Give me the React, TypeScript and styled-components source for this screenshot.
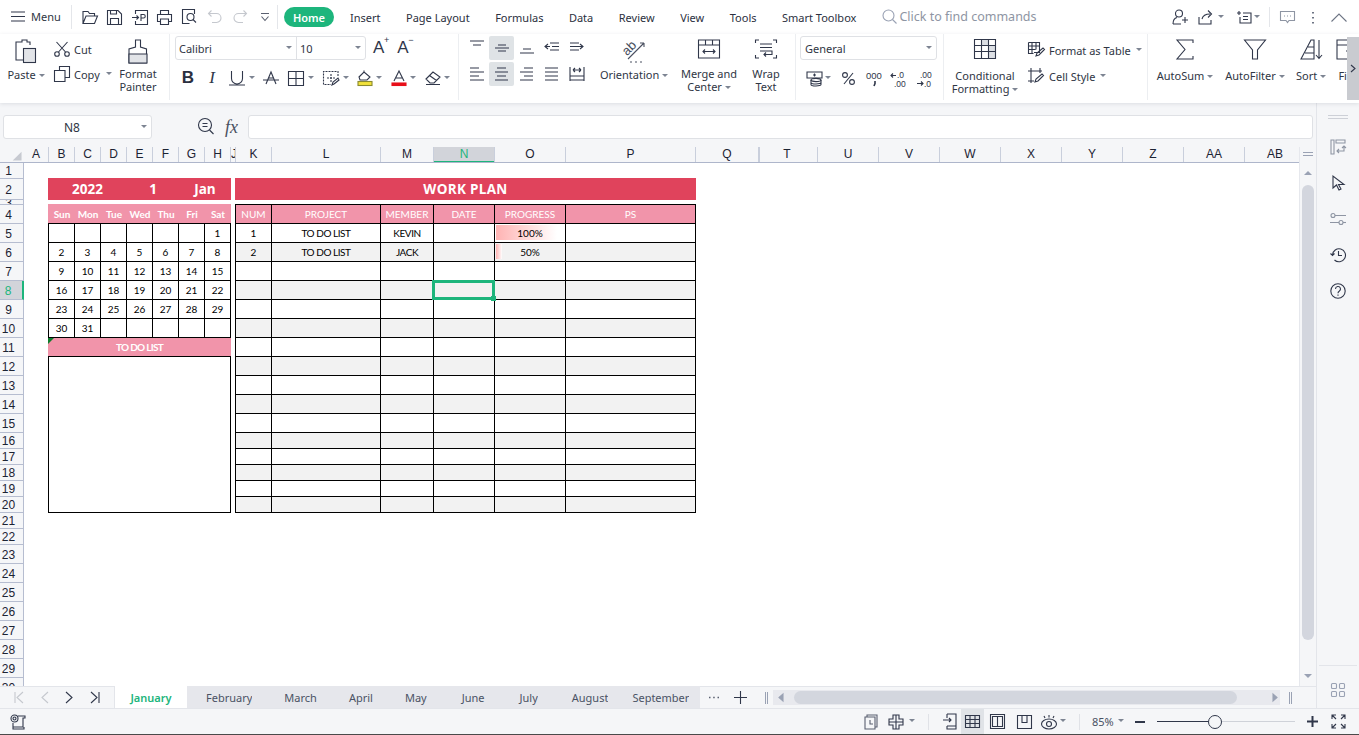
import React from 'react'
import styled, { createGlobalStyle } from 'styled-components'

const GlobalStyle = createGlobalStyle`
  html, body { margin: 0; padding: 0; width: 1359px; height: 735px; overflow: hidden; background: #fff; }
  * { box-sizing: border-box; }
  body { font-family: "Noto Sans", "Open Sans", sans-serif; font-size: 11px; color: #2f3644; }
  svg { display: block; flex-shrink: 0; fill: none; stroke: #30374a; stroke-width: 1.1; overflow: visible; }
`

const GREEN = '#1db57c'

const Page = styled('div')`
  width: 1359px;
  height: 735px;
  display: flex;
  flex-direction: column;
  overflow: hidden;
`

/* ---------- top bar ---------- */
const TopBar = styled('div')`
  height: 34px;
  display: flex;
  align-items: center;
  background: #fff;
  flex-shrink: 0;
`
const MenuButton = styled('div')`
  width: 72px;
  height: 24px;
  padding: 0 0 2px 11px;
  display: flex;
  align-items: center;
  gap: 6px;
  border-right: 1px solid #e4e6ea;
`
const QuickIcons = styled('div')`
  margin-left: 5px;
  width: 201px;
  height: 24px;
  display: flex;
  align-items: center;
  border-right: 1px solid #e4e6ea;
`
const QuickIcon = styled('div')`
  width: 25px;
  display: flex;
  justify-content: center;
`
const HomePill = styled('div')`
  margin-left: 6px;
  width: 50px;
  height: 20px;
  border-radius: 10px;
  background: ${GREEN};
  color: #fff;
  font-weight: 600;
  display: flex;
  align-items: center;
  justify-content: center;
`
const MenuTabs = styled('nav')`
  margin-left: 16px;
  display: flex;
  gap: 25.5px;
  color: #2b3040;
  white-space: nowrap;
`
const FindBox = styled('div')`
  margin-left: 26px;
  padding-bottom: 2px;
  display: flex;
  align-items: center;
  gap: 2px;
  color: #8e95a3;
  font-size: 12.5px;
  white-space: nowrap;
`
const Actions = styled('div')`
  margin-left: auto;
  padding-right: 12px;
  display: flex;
  align-items: center;
`
const ActionDivider = styled('div')`
  width: 1px;
  height: 20px;
  margin: 0 10px 0 9px;
  background: #e4e6ea;
`
const Slot = styled('span')<{ $ml?: number }>`
  display: inline-flex;
  align-items: center;
  margin-left: ${({ $ml }) => $ml ?? 0}px;
  flex-shrink: 0;
`
const Caret = styled('i')<{ $ml?: number }>`
  display: inline-block;
  flex-shrink: 0;
  width: 0;
  height: 0;
  margin-left: ${({ $ml }) => $ml ?? 0}px;
  border-left: 3px solid transparent;
  border-right: 3px solid transparent;
  border-top: 3px solid #7d8492;
  vertical-align: middle;
  position: relative;
  top: -1px;
`

/* ---------- ribbon ---------- */
const Ribbon = styled('div')`
  position: relative;
  z-index: 2;
  height: 69px;
  display: flex;
  flex-shrink: 0;
  overflow: hidden;
  background: #fff;
  box-shadow: 0 1px 4px rgba(40, 50, 70, 0.12);
`
const Group = styled('div')<{ $w: number; $last?: boolean }>`
  width: ${({ $w }) => $w}px;
  height: 66px;
  flex-shrink: 0;
  display: flex;
  align-items: flex-start;
  border-right: ${({ $last }) => ($last ? 'none' : '1px solid #eceef1')};
`
const BigTool = styled('div')<{ $w: number; $ml?: number; $iconH?: number }>`
  width: ${({ $w }) => $w}px;
  margin-left: ${({ $ml }) => $ml ?? 0}px;
  padding-top: 5px;
  flex-shrink: 0;
  display: flex;
  flex-direction: column;
  align-items: center;
  & > div:first-child {
    height: ${({ $iconH }) => $iconH ?? 28}px;
    display: flex;
    align-items: flex-start;
    justify-content: center;
  }
`
const BigIcon = styled('div')``
const ToolLabel = styled('div')`
  line-height: 13px;
  text-align: center;
  white-space: nowrap;
  color: #2f3644;
`
const SmallTools = styled('div')`
  margin-left: 6px;
  width: 60px;
  display: flex;
  flex-direction: column;
  gap: 7px;
  padding-top: 6px;
`
const SmallTool = styled('div')`
  height: 18px;
  display: flex;
  align-items: center;
  gap: 4px;
  white-space: nowrap;
`
const StyleTools = styled('div')`
  margin-left: 11px;
  display: flex;
  flex-direction: column;
  gap: 8px;
  padding-top: 7px;
`
const FontColumn = styled('div')`
  padding: 2px 0 0 5px;
`
const FontRow = styled('div')`
  display: flex;
  align-items: center;
`
const FontBox = styled('div')`
  width: 191px;
  height: 24px;
  display: flex;
  border: 1px solid #dfe1e5;
  border-radius: 3px;
`
const FontName = styled('div')<{ $w: number }>`
  width: ${({ $w }) => $w}px;
  padding: 0 4px 0 3px;
  display: flex;
  align-items: center;
  justify-content: space-between;
  & + & {
    border-left: 1px solid #dfe1e5;
  }
`
const ToolRow = styled('div')`
  margin-top: 5px;
  height: 26px;
  display: flex;
  align-items: center;
`
const GrowGlyph = styled('span')<{ $ml: number }>`
  margin-left: ${({ $ml }) => $ml}px;
  position: relative;
  font-family: "Liberation Sans", sans-serif;
  font-size: 17px;
  line-height: 20px;
  color: #30374a;
  & sup {
    position: absolute;
    left: 11px;
    top: -3px;
    font-size: 9px;
    line-height: 10px;
  }
`
const BoldGlyph = styled('span')`
  font-family: "Liberation Sans", sans-serif;
  font-size: 17px;
  font-weight: 700;
  width: 18px;
  text-align: center;
  color: #2b3040;
`
const ItalicGlyph = styled('span')`
  font-family: "Liberation Serif", serif;
  font-size: 17px;
  font-style: italic;
  width: 16px;
  margin-left: 7px;
  text-align: center;
  color: #30374a;
`
const AlignGrid = styled('div')`
  margin: 2px 0 0 5px;
  display: grid;
  grid-template-columns: repeat(5, 25px);
  grid-auto-rows: 24px;
  row-gap: 2px;
`
const AlignCell = styled('div')<{ $active?: boolean }>`
  display: flex;
  align-items: center;
  justify-content: center;
  background: ${({ $active }) => ($active ? '#dfe3e6' : 'transparent')};
  border-radius: 2px;
`
const NumberColumn = styled('div')`
  padding: 2px 0 0 4px;
`
const FormatSelect = styled('div')`
  width: 137px;
  height: 24px;
  padding: 0 4px;
  display: flex;
  align-items: center;
  justify-content: space-between;
  border: 1px solid #dfe1e5;
  border-radius: 3px;
`
const RibbonMore = styled('div')`
  position: absolute;
  right: 0;
  top: 3px;
  width: 12px;
  height: 63px;
  background: #c9cbd0;
  display: flex;
  align-items: center;
  justify-content: center;
`

/* ---------- workspace ---------- */
const Workspace = styled('div')`
  flex: 1;
  min-height: 0;
  display: flex;
`
const LeftPane = styled('div')`
  width: 1316px;
  display: flex;
  flex-direction: column;
`
const FormulaBar = styled('div')`
  height: 44px;
  flex-shrink: 0;
  padding: 12px 3px 0;
  display: flex;
  align-items: flex-start;
  background: #f5f6f8;
`
const NameBox = styled('div')`
  width: 149px;
  height: 24px;
  padding: 0 4px 0 60px;
  display: flex;
  align-items: center;
  justify-content: space-between;
  background: #fff;
  border: 1px solid #dfe1e5;
  border-radius: 3px;
  font-size: 12px;
`
const FxGlyph = styled('span')`
  margin-left: 10px;
  width: 20px;
  font-family: "Liberation Serif", serif;
  font-style: italic;
  font-size: 18px;
  line-height: 24px;
  color: #4a5060;
`
const FormulaInput = styled('div')`
  margin-left: 3px;
  width: 1066px;
  height: 24px;
  background: #fff;
  border: 1px solid #dfe1e5;
  border-radius: 3px;
`
const SheetArea = styled('div')`
  flex: 1;
  min-height: 0;
  display: flex;
`
const Grid = styled('div')`
  width: 1299px;
  display: flex;
  flex-direction: column;
  overflow: hidden;
`
const ColHeads = styled('div')`
  height: 16px;
  flex-shrink: 0;
  display: flex;
  background: #f5f6f8;
  border-bottom: 1px solid #aeb6cb;
`
const Corner = styled('div')`
  width: 24px;
  flex-shrink: 0;
  display: flex;
  align-items: flex-end;
  justify-content: flex-end;
  padding: 0 3px 2px 0;
`
const ColHead = styled('div')<{ $w: number; $active?: boolean; $double?: boolean }>`
  width: ${({ $w }) => $w}px;
  height: 15px;
  flex-shrink: 0;
  overflow: hidden;
  font-family: "Liberation Sans", sans-serif;
  font-size: 12px;
  line-height: 15px;
  text-align: center;
  padding-right: ${({ $double }) => ($double ? 3 : 0)}px;
  color: ${({ $active }) => ($active ? GREEN : '#1c2333')};
  background: ${({ $active }) => ($active ? '#d2d4da' : 'transparent')};
  border-right: 1px solid #c9cfdc;
  border-left: ${({ $double }) => ($double ? '1px solid #c9cfdc' : 'none')};
  box-shadow: ${({ $active }) => ($active ? `inset 0 -1px 0 ${GREEN}` : 'none')};
`
const GridBody = styled('div')`
  flex: 1;
  min-height: 0;
  display: flex;
`
const RowHeads = styled('div')`
  width: 24px;
  flex-shrink: 0;
  background: #f5f6f8;
`
const RowHead = styled('div')<{ $h: number; $active?: boolean }>`
  height: ${({ $h }) => $h}px;
  padding-right: 6px;
  overflow: hidden;
  font-family: "Liberation Sans", sans-serif;
  font-size: 12px;
  line-height: ${({ $h }) => $h + 1}px;
  text-align: center;
  color: ${({ $active }) => ($active ? GREEN : '#1c2333')};
  background: ${({ $active }) => ($active ? '#d2d4da' : 'transparent')};
  border-bottom: 1px solid #b6bdd0;
  border-right: ${({ $active }) => ($active ? `2px solid ${GREEN}` : '1px solid #b6bdd0')};
`
const Canvas = styled('div')`
  flex: 1;
  padding: 15px 0 0 24px;
  display: flex;
  align-items: flex-start;
  gap: 4px;
  background: #fff;
  font-family: Lato, "Open Sans", sans-serif;
  font-size: 10px;
  color: #000;
`
const Calendar = styled('div')`
  width: 183px;
`
const TitleBar = styled('div')`
  height: 22px;
  margin-bottom: 4px;
  background: #e0435c;
  color: #fff;
  font-family: "Open Sans", sans-serif;
  font-weight: 700;
  font-size: 13.5px;
  display: grid;
  align-items: center;
  text-align: center;
`
const YearTitle = styled(TitleBar)`
  grid-template-columns: 79px 52px 52px;
`
const PlanTitle = styled(TitleBar)`
  letter-spacing: 0.3px;
`
const DayHeads = styled('div')`
  height: 19px;
  display: grid;
  grid-template-columns: repeat(7, 26px);
  padding-left: 1px;
  align-items: center;
  text-align: center;
  background: #f194aa;
  color: #fff;
  font-weight: 700;
  font-size: 10px;
`
const DayGrid = styled('div')`
  display: grid;
  grid-template-columns: repeat(7, 26px);
  grid-auto-rows: 19px;
  border-top: 1px solid #000;
  border-left: 1px solid #000;
`
const DayCell = styled('div')`
  display: flex;
  align-items: center;
  justify-content: center;
  border-right: 1px solid #000;
  border-bottom: 1px solid #000;
`
const TodoHead = styled('div')`
  position: relative;
  height: 19px;
  display: flex;
  align-items: center;
  justify-content: center;
  background: #f194aa;
  color: #fff;
  font-weight: 700;
  letter-spacing: -0.7px;
  border-bottom: 1px solid #000;
  &::before {
    content: '';
    position: absolute;
    left: 0;
    top: 0;
    border-top: 6px solid #0e7d2c;
    border-right: 6px solid transparent;
  }
`
const TodoBox = styled('div')`
  height: 156px;
  border: 1px solid #000;
  border-top: none;
`
const Plan = styled('div')`
  width: 461px;
`
const PlanTable = styled('div')`
  display: grid;
  grid-template-columns: 36px 109px 53px 61px 71px 130px;
  grid-template-rows: 19px repeat(11, 19px) repeat(5, 16px);
  border-top: 1px solid #000;
  border-left: 1px solid #000;
`
const PlanHead = styled('div')`
  display: flex;
  align-items: center;
  justify-content: center;
  background: #f194aa;
  color: #fff;
  border-right: 1px solid #000;
  border-bottom: 1px solid #000;
`
const PlanCell = styled('div')<{ $grey: boolean; $bar?: number; $tight?: boolean }>`
  position: relative;
  display: flex;
  align-items: center;
  justify-content: center;
  letter-spacing: ${({ $tight }) => ($tight ? '-0.45px' : 'normal')};
  border-right: 1px solid #000;
  border-bottom: 1px solid #000;
  background-color: ${({ $grey }) => ($grey ? '#f2f2f2' : '#fff')};
  background-image: ${({ $bar }) =>
    $bar ? 'linear-gradient(to right, #ffb3b3, rgba(255,255,255,0.9))' : 'none'};
  background-repeat: no-repeat;
  background-position: 1px 1px;
  background-size: ${({ $bar }) => ($bar ? `${$bar}px 15px` : 'auto')};
`
const Selection = styled('div')`
  position: absolute;
  z-index: 1;
  left: -2px;
  right: -1px;
  top: -1px;
  bottom: -1px;
  border: 3px solid ${GREEN};
  &::after {
    content: '';
    position: absolute;
    right: -4px;
    bottom: -4px;
    width: 5px;
    height: 5px;
    background: ${GREEN};
  }
`
const VScroll = styled('div')`
  width: 17px;
  flex-shrink: 0;
  display: flex;
  flex-direction: column;
  align-items: center;
  background: #f5f6f8;
  border-left: 1px solid #e6e8ed;
`
const ScrollHandle = styled('div')`
  width: 10px;
  height: 4px;
  margin-top: 5px;
  border-top: 1px solid #9aa2b4;
  border-bottom: 1px solid #9aa2b4;
`
const ArrowUp = styled('i')`
  margin-top: 15px;
  border-left: 4px solid transparent;
  border-right: 4px solid transparent;
  border-bottom: 4px solid #9aa2b4;
`
const ArrowDown = styled('i')`
  margin: auto 0 8px;
  border-left: 4px solid transparent;
  border-right: 4px solid transparent;
  border-top: 4px solid #9aa2b4;
`
const VThumb = styled('div')`
  width: 12px;
  height: 455px;
  margin-top: 10px;
  border-radius: 6px;
  background: #d3d6de;
`

/* ---------- sheet tabs ---------- */
const TabStrip = styled('div')`
  height: 22px;
  flex-shrink: 0;
  display: flex;
  align-items: stretch;
  background: #f5f6f8;
`
const TabNav = styled('div')`
  width: 115px;
  display: flex;
  align-items: center;
  justify-content: space-around;
  padding: 0 6px;
  border-top: 1px solid #e3e5ea;
  border-right: 1px solid #e3e5ea;
`
const SheetTab = styled('div')<{ $active?: boolean; $pl?: number }>`
  padding: 0 0 0 ${({ $pl }) => $pl ?? 32}px;
  display: flex;
  align-items: center;
  white-space: nowrap;
  background: ${({ $active }) => ($active ? '#fff' : '#e6e7ec')};
  color: ${({ $active }) => ($active ? GREEN : '#4a5264')};
  font-weight: ${({ $active }) => ($active ? 600 : 400)};
`
const JanuaryTab = styled(SheetTab)`
  width: 72px;
  padding: 0;
  justify-content: center;
`
const TabEnd = styled('div')`
  width: 11px;
  background: #e6e7ec;
`
const TabTools = styled('div')`
  flex: 1;
  display: flex;
  align-items: center;
  border-top: 1px solid #e3e5ea;
`
const HScroll = styled('div')`
  width: 507px;
  height: 15px;
  margin-left: 5px;
  padding: 0 3px 0 6px;
  display: flex;
  align-items: center;
  background: #e8e9ee;
`
const HThumb = styled('div')`
  width: 443px;
  height: 13px;
  margin: 0 auto 0 11px;
  border-radius: 7px;
  background: #d3d6de;
`
const Splitter = styled('div')<{ $ml: number }>`
  width: 3px;
  height: 12px;
  margin-left: ${({ $ml }) => $ml}px;
  border-left: 1px solid #9aa2b4;
  border-right: 1px solid #9aa2b4;
`

/* ---------- side rail ---------- */
const Rail = styled('aside')`
  width: 43px;
  display: flex;
  flex-direction: column;
  align-items: center;
  background: #f5f6f8;
  border-left: 1px solid #e3e5ea;
`
const RailHandle = styled('div')`
  width: 20px;
  height: 4px;
  margin: 12px 0 10px;
  border-top: 1px solid #cdd0d7;
  border-bottom: 1px solid #cdd0d7;
`
const RailIcon = styled('div')`
  height: 36px;
  display: flex;
  align-items: center;
`
const RailFoot = styled('div')`
  margin-top: auto;
  width: 38px;
  height: 43px;
  padding-top: 17px;
  display: flex;
  justify-content: center;
  border-top: 1px solid #e3e5ea;
`

/* ---------- status bar ---------- */
const StatusBar = styled('footer')`
  height: 27px;
  flex-shrink: 0;
  padding-left: 10px;
  display: flex;
  align-items: center;
  background: #f5f6f8;
  border-top: 1px solid #e3e5ea;
  border-bottom: 1px solid #4a4a4a;
`
const ActiveView = styled('div')`
  width: 23px;
  height: 25px;
  margin-left: 4px;
  display: flex;
  align-items: center;
  justify-content: center;
  background: #e0e3e7;
`
const StatusDivider = styled('div')<{ $ml: number }>`
  width: 1px;
  height: 16px;
  margin-left: ${({ $ml }) => $ml}px;
  background: #e0e2e7;
`
const ZoomValue = styled('span')`
  margin-left: 12px;
  color: #4a5264;
`
const Slider = styled('div')`
  position: relative;
  width: 138px;
  height: 1px;
  margin-left: 12px;
  background: linear-gradient(to right, #30374a 52px, #cfd2d9 52px);
  &::after {
    content: '';
    position: absolute;
    left: 51px;
    top: -6px;
    width: 12px;
    height: 12px;
    border-radius: 50%;
    background: #f5f6f8;
    border: 1px solid #30374a;
  }
`

/* ---------- icons ---------- */
function Ico({ w, h, children, s }: { w: number; h: number; children: React.ReactNode; s?: string }) {
  return (
    <svg width={w} height={h} viewBox={`0 0 ${w} ${h}`} style={s ? { stroke: s } : undefined}>
      {children}
    </svg>
  )
}

const LIGHT = '#c5c8ce'

const quickIcons = [
  <Ico w={16} h={15}><path d="M1 13.5V1.5h5l1.5 2h5V6M1 13.5 4 6h11.5l-3 7.5z" /></Ico>,
  <Ico w={15} h={15}><path d="M.5.5h10.5l3.5 3.5v10.5H.5zM3.5 14.5V8.5h8v6M3.5.5v3.5h6V.5" /></Ico>,
  <Ico w={16} h={15}><path d="M3.5 4V.5h12v14h-12V11M0 7.5h6.5M4.5 5.5l2 2-2 2M9 11V4.5h2.5a1.7 1.7 0 0 1 0 3.5H9" /></Ico>,
  <Ico w={15} h={15}><path d="M3.5 4.5V.5h8v4M3.5 11.5H.5v-7h14v7h-3M3.5 9h8v5.5h-8z" /></Ico>,
  <Ico w={15} h={16}><path d="M12.5 5V.5H.5v14h7" /><circle cx="8.5" cy="8" r="3.5" /><path d="m11 10.5 3 3" /></Ico>,
  <Ico w={14} h={14} s={LIGHT}><path d="M3.5.5.5 3.5l3 3M.5 3.5h8a4.5 4.5 0 0 1 0 9H4" /></Ico>,
  <Ico w={14} h={14} s={LIGHT}><path d="m10.5.5 3 3-3 3M13.5 3.5h-8a4.5 4.5 0 0 0 0 9H10" /></Ico>,
  <Ico w={10} h={9} s="#5a6070"><path d="M1 .5h8M1.5 3.5 5 7.5l3.5-4" /></Ico>,
]

const alignIcons = [
  'M1 1h14M4 5h8',
  'M4 5h8M1 8h14M4 11h8',
  'M4 9h8M1 13h14',
  'M6 3h9M8 6.5h7M6 10h9M4 4 1 6.5 4 9M1 6.5h5',
  'M1 3h9M1 6.5h7M1 10h9M11 4l3 2.5L11 9M8 6.5h6',
  'M1 2h9M1 6h14M1 10h9M1 14h14',
  'M3 2h9M1 6h13M3 10h9M1 14h13',
  'M5 2h9M1 6h13M5 10h9M1 14h13',
  'M1 2h13M1 6h13M1 10h13M1 14h13',
  'M1 1v14M15 1v14M1 10h14M1 14h14M4 4h8M4 4l2-2M4 4l2 2M12 4l-2-2M12 4l-2 2',
]

function DayTable() {
  const days = [
    '', '', '', '', '', '', '1',
    '2', '3', '4', '5', '6', '7', '8',
    '9', '10', '11', '12', '13', '14', '15',
    '16', '17', '18', '19', '20', '21', '22',
    '23', '24', '25', '26', '27', '28', '29',
    '30', '31', '', '', '', '', '',
  ]
  return (
    <DayGrid>
      {days.map((d, i) => (
        <DayCell key={i}>{d}</DayCell>
      ))}
    </DayGrid>
  )
}

function PlanRows() {
  const rows = []
  for (let r = 5; r <= 20; r++) {
    const grey = r % 2 === 0
    const first = r === 5 || r === 6
    rows.push(
      <React.Fragment key={r}>
        <PlanCell $grey={grey}>{r === 5 ? '1' : r === 6 ? '2' : ''}</PlanCell>
        <PlanCell $grey={grey} $tight>{first ? 'TO DO LIST' : ''}</PlanCell>
        <PlanCell $grey={grey} $tight>{r === 5 ? 'KEVIN' : r === 6 ? 'JACK' : ''}</PlanCell>
        <PlanCell $grey={grey}>{r === 8 && <Selection />}</PlanCell>
        <PlanCell $grey={grey} $bar={r === 5 ? 61 : r === 6 ? 6 : undefined}>
          {r === 5 ? '100%' : r === 6 ? '50%' : ''}
        </PlanCell>
        <PlanCell $grey={grey} />
      </React.Fragment>,
    )
  }
  return <>{rows}</>
}

const rowHeights = [
  16, 21, 5, 19, 19, 19, 19, 19, 19, 19, 19, 19, 19, 19, 19, 16, 16, 16, 16, 16, 16, 16, 19, 19, 19, 19, 19, 19, 19, 19,
]

const columns: [string, number][] = [
  ['A', 25], ['B', 26], ['C', 26], ['D', 26], ['E', 26], ['F', 26], ['G', 26], ['H', 26], ['J', 5],
  ['K', 36], ['L', 109], ['M', 53], ['N', 61], ['O', 71], ['P', 130], ['Q', 63], ['T', 59],
  ['U', 61], ['V', 61], ['W', 61], ['X', 61], ['Y', 61], ['Z', 61], ['AA', 61], ['AB', 61],
]

const sheetTabs: [string, number][] = [
  ['February', 19], ['March', 32], ['April', 32], ['May', 32], ['June', 35], ['July', 35], ['August', 34], ['September', 24],
]

export default function App() {
  return (
    <Page>
      <GlobalStyle />
      <TopBar>
        <MenuButton>
          <Ico w={14} h={11}><path d="M0 1h14M0 5.5h14M0 10h14" /></Ico>
          Menu
        </MenuButton>
        <QuickIcons>
          {quickIcons.map((icon, i) => (
            <QuickIcon key={i}>{icon}</QuickIcon>
          ))}
        </QuickIcons>
        <HomePill>Home</HomePill>
        <MenuTabs>
          <span>Insert</span>
          <span>Page Layout</span>
          <span>Formulas</span>
          <span>Data</span>
          <span>Review</span>
          <span>View</span>
          <span>Tools</span>
          <span>Smart Toolbox</span>
        </MenuTabs>
        <FindBox>
          <Ico w={15} h={15} s="#9aa2b4"><circle cx="6.5" cy="6.5" r="5.5" /><path d="m10.5 10.5 4 4" /></Ico>
          Click to find commands
        </FindBox>
        <Actions>
          <Slot>
            <Ico w={16} h={16}><circle cx="7" cy="4.5" r="3.5" /><path d="M1 15c0-4 2-6 4-6.5M1 15h8M13 8v6M10 11h6" /></Ico>
          </Slot>
          <Slot $ml={10}>
            <Ico w={18} h={15}><path d="M1 7v7h12V10M4 9c1-4 4-5 8-5M10 .5 13.5 4 10 7.5" /></Ico>
          </Slot>
          <Caret $ml={2} />
          <Slot $ml={12}>
            <Ico w={16} h={14}><path d="M3 1v4M1 3h4M7 3h8v10H4V7M7 6.5h5M7 9.5h5" /></Ico>
          </Slot>
          <Caret $ml={2} />
          <ActionDivider />
          <Slot>
            <Ico w={15} h={13} s="#8e95a3"><path d="M.5.5h14v9H9l-1.5 2-1.5-2H.5zM4 5h1M7 5h1M10 5h1" /></Ico>
          </Slot>
          <Slot $ml={16}>
            <Ico w={4} h={13} s="#6d7484"><path d="M2 1v1.5M2 6v1.5M2 11v1.5" strokeWidth="2" /></Ico>
          </Slot>
          <Slot $ml={16}>
            <Ico w={16} h={9} s="#6d7484"><path d="M.5 8.5 8 1l7.5 7.5" /></Ico>
          </Slot>
        </Actions>
      </TopBar>

      <Ribbon>
        <Group $w={170}>
          <BigTool $w={44} $ml={4} $iconH={29}>
            <BigIcon>
              <Ico w={22} h={24}>
                <path d="M15 6V3h-3V1H7v2H1v18h7" />
                <rect x="8.5" y="9.5" width="12" height="14" fill="#e2e4e8" />
              </Ico>
            </BigIcon>
            <ToolLabel>Paste <Caret /></ToolLabel>
          </BigTool>
          <SmallTools>
            <SmallTool>
              <Ico w={16} h={16}><circle cx="3" cy="13" r="2.3" /><circle cx="13" cy="13" r="2.3" /><path d="m4.5 11 9-10M11.5 11l-9-10" /></Ico>
              Cut
            </SmallTool>
            <SmallTool>
              <Ico w={16} h={16}><path d="M5.5 4V.5h10v11H11M.5 4.5h10.5v11H.5z" /></Ico>
              Copy <Caret $ml={2} />
            </SmallTool>
          </SmallTools>
          <BigTool $w={48}>
            <BigIcon>
              <Ico w={20} h={25}>
                <path d="M7.5 8V1h5v7l6 2v14H1V10z" />
                <path d="M1 15h18v9H1z" fill="#e2e4e8" />
              </Ico>
            </BigIcon>
            <ToolLabel>Format</ToolLabel>
            <ToolLabel>Painter</ToolLabel>
          </BigTool>
        </Group>

        <Group $w={289}>
          <FontColumn>
            <FontRow>
              <FontBox>
                <FontName $w={120}>Calibri<Caret /></FontName>
                <FontName $w={69}>10<Caret /></FontName>
              </FontBox>
              <GrowGlyph $ml={7}>A<sup>+</sup></GrowGlyph>
              <GrowGlyph $ml={13}>A<sup>−</sup></GrowGlyph>
            </FontRow>
            <ToolRow>
              <Slot $ml={4}><BoldGlyph>B</BoldGlyph></Slot>
              <ItalicGlyph>I</ItalicGlyph>
              <Slot $ml={9}>
                <Ico w={16} h={16}><path d="M2.5 1v7.5a5.5 5.5 0 0 0 11 0V1M0 15h16" /></Ico>
              </Slot>
              <Caret $ml={4} />
              <Slot $ml={8}>
                <Ico w={16} h={15}><path d="m3 13 5-12 5 12M0 9h16M5 7h6" /></Ico>
              </Slot>
              <Slot $ml={9}>
                <Ico w={16} h={15}><path d="M.5.5h15v14H.5zM8 .5v14M.5 7.5h15" /></Ico>
              </Slot>
              <Caret $ml={4} />
              <Slot $ml={9}>
                <Ico w={16} h={15}><path d="M15 5V.5H.5v13H8M8 3v8M4 7h8" strokeDasharray="2 1" /><path d="m9 14 1-3 5-4 1 2-5 4z" /></Ico>
              </Slot>
              <Caret $ml={4} />
              <Slot $ml={8}>
                <Ico w={16} h={16}>
                  <path d="m2 7 5-5 6 5-3 3H3zM7 2V.5" />
                  <rect x="1" y="11.5" width="14" height="4" fill="#f2e23a" stroke="#8a8a30" />
                </Ico>
              </Slot>
              <Caret $ml={3} />
              <Slot $ml={9}>
                <Ico w={16} h={16}>
                  <path d="m3 11 5-10 5 10M5 8h6" />
                  <rect x="1" y="13" width="14" height="2.5" fill="#e8101a" stroke="#e8101a" />
                </Ico>
              </Slot>
              <Caret $ml={3} />
              <Slot $ml={9}>
                <Ico w={16} h={14}><path d="m1 8 7-7 7 5-6 6H5zM4.5 4.5l7 5M1 13.5h14" /></Ico>
              </Slot>
              <Caret $ml={3} />
            </ToolRow>
          </FontColumn>
        </Group>

        <Group $w={337}>
          <AlignGrid>
            {alignIcons.map((d, i) => (
              <AlignCell key={i} $active={i === 1 || i === 6}>
                <Ico w={16} h={16}><path d={d} /></Ico>
              </AlignCell>
            ))}
          </AlignGrid>
          <BigTool $w={68} $ml={11} $iconH={29}>
            <BigIcon>
              <Ico w={26} h={26} s="#4a5060">
                <text x="9" y="13" textAnchor="middle" fontSize="13" fill="#4a5060" stroke="none" transform="rotate(-45 9 10)" fontFamily="Liberation Sans">ab</text>
                <path d="m7 20 16-16M23 4h-4M23 4v4M9 23h2M14 23h2M19 23h2" />
              </Ico>
            </BigIcon>
            <ToolLabel>Orientation <Caret /></ToolLabel>
          </BigTool>
          <BigTool $w={60} $ml={11}>
            <BigIcon>
              <Ico w={22} h={20}>
                <path d="M.5 1h21v18H.5zM.5 6h21M7.5 1v5M14.5 1v5M5 12.5h12M7 10.5l-2 2 2 2M15 10.5l2 2-2 2" />
              </Ico>
            </BigIcon>
            <ToolLabel>Merge and</ToolLabel>
            <ToolLabel>Center <Caret /></ToolLabel>
          </BigTool>
          <BigTool $w={36} $ml={9}>
            <BigIcon>
              <Ico w={22} h={20}>
                <path d="M4 1H.5v3M18 1h3.5v3M4 19H.5v-3M18 19h3.5v-3M5 5h12M5 8.5h12M5 12h12v3.5H9M11 13.5l-2 2 2 2" />
              </Ico>
            </BigIcon>
            <ToolLabel>Wrap</ToolLabel>
            <ToolLabel>Text</ToolLabel>
          </BigTool>
        </Group>

        <Group $w={148}>
          <NumberColumn>
            <FormatSelect>General<Caret /></FormatSelect>
            <ToolRow>
              <Slot $ml={6}>
                <Ico w={17} h={15}>
                  <path d="M1 1h15v6H1zM8.5 2.5v3M7 4h3" />
                  <ellipse cx="10" cy="9" rx="5" ry="1.6" />
                  <path d="M5 9v4.5c0 .9 2.2 1.5 5 1.5s5-.6 5-1.5V9M5 11.5c0 .9 2.2 1.5 5 1.5s5-.6 5-1.5" />
                </Ico>
              </Slot>
              <Caret $ml={2} />
              <Slot $ml={11}>
                <Ico w={13} h={13}><circle cx="3" cy="3" r="2.4" /><circle cx="10" cy="10" r="2.4" /><path d="M11 1 2 12" /></Ico>
              </Slot>
              <Slot $ml={11}>
                <Ico w={18} h={20}>
                  <text x="0" y="11" fontSize="9.5" fill="#30374a" stroke="none" fontFamily="Liberation Sans">000</text>
                  <path d="M9 13v2.5L8 18" strokeWidth="1.6" />
                </Ico>
              </Slot>
              <Slot $ml={6}>
                <Ico w={20} h={20}>
                  <text x="7" y="10" fontSize="8.5" fill="#30374a" stroke="none" fontFamily="Liberation Sans">.0</text>
                  <text x="4" y="19" fontSize="8.5" fill="#30374a" stroke="none" fontFamily="Liberation Sans">.00</text>
                  <path d="M1 7.5h5M3 5.5l-2 2 2 2" />
                </Ico>
              </Slot>
              <Slot $ml={5}>
                <Ico w={20} h={20}>
                  <text x="5" y="10" fontSize="8.5" fill="#30374a" stroke="none" fontFamily="Liberation Sans">.00</text>
                  <text x="9" y="19" fontSize="8.5" fill="#30374a" stroke="none" fontFamily="Liberation Sans">.0</text>
                  <path d="M2 15.5h6M6 13.5l2 2-2 2" />
                </Ico>
              </Slot>
            </ToolRow>
          </NumberColumn>
        </Group>

        <Group $w={204}>
          <BigTool $w={64} $ml={9} $iconH={30}>
            <BigIcon>
              <Ico w={22} h={20}>
                <path d="M7.5 .5h7v6h-7zM14.5 6.5h7v6h-7zM14.5 12.5h7v7h-7z" fill="#dcdfe4" stroke="none" />
                <path d="M.5 .5h21v19H.5zM.5 6.5h21M.5 12.5h21M7.5 .5v19M14.5 .5v19" />
              </Ico>
            </BigIcon>
            <ToolLabel>Conditional</ToolLabel>
            <ToolLabel>Formatting <Caret /></ToolLabel>
          </BigTool>
          <StyleTools>
            <SmallTool>
              <Ico w={17} h={16}><path d="M.5.5h11v10H6M.5.5v11h5M.5 4h11M.5 7.5h7M4 .5v11M8 .5v7" /><path d="m8 14 1-3 6-5 1.5 1.5-5.5 5.5z" /></Ico>
              Format as Table <Caret $ml={1} />
            </SmallTool>
            <SmallTool>
              <Ico w={17} h={16}><path d="M3 0v15M0 3h14M12 0v5M0 13h6" /><path d="m7 14 1-3 6-5 1.5 1.5-5.5 5.5z" /></Ico>
              Cell Style <Caret $ml={1} />
            </SmallTool>
          </StyleTools>
        </Group>

        <Group $w={211} $last>
          <BigTool $w={58} $ml={8} $iconH={30}>
            <BigIcon>
              <Ico w={18} h={21}><path d="M17 4V1H1l8 9.5L1 20h16v-3" /></Ico>
            </BigIcon>
            <ToolLabel>AutoSum <Caret /></ToolLabel>
          </BigTool>
          <BigTool $w={66} $ml={8} $iconH={30}>
            <BigIcon>
              <Ico w={22} h={21}><path d="M.5 1h21l-8 10v9h-5v-9z" /></Ico>
            </BigIcon>
            <ToolLabel>AutoFilter <Caret /></ToolLabel>
          </BigTool>
          <BigTool $w={34} $ml={6} $iconH={30}>
            <BigIcon>
              <Ico w={23} h={21}>
                <path d="M1 20 11 1h3v19zM5 14h9M8 8h6M19 1v18M16 16l3 3.5 3-3.5" />
              </Ico>
            </BigIcon>
            <ToolLabel>Sort <Caret /></ToolLabel>
          </BigTool>
          <BigTool $w={17} $ml={9} $iconH={30}>
            <BigIcon>
              <Ico w={20} h={21}><path d="M1 1h18v19H1zM1 6h18M10 12h6" /></Ico>
            </BigIcon>
            <ToolLabel>Fill</ToolLabel>
          </BigTool>
        </Group>
        <RibbonMore>
          <Ico w={6} h={9}><path d="m1 1 4 3.5L1 8" /></Ico>
        </RibbonMore>
      </Ribbon>

      <Workspace>
        <LeftPane>
          <FormulaBar>
            <NameBox>N8<Caret /></NameBox>
            <Slot $ml={45}>
              <Ico w={18} h={24}>
                <circle cx="8" cy="10" r="6.5" />
                <path d="m12.5 15 4 4M5.5 8.5h5M5.5 11.5h5" />
              </Ico>
            </Slot>
            <FxGlyph>fx</FxGlyph>
            <FormulaInput />
          </FormulaBar>

          <SheetArea>
            <Grid>
              <ColHeads>
                <Corner>
                  <Ico w={7} h={7} s="#c7cad1"><path d="M7 0v7H0z" fill="#c7cad1" /></Ico>
                </Corner>
                {columns.map(([name, w]) => (
                  <ColHead key={name} $w={w} $active={name === 'N'} $double={name === 'T'}>
                    {name}
                  </ColHead>
                ))}
              </ColHeads>
              <GridBody>
                <RowHeads>
                  {rowHeights.map((h, i) => (
                    <RowHead key={i} $h={h} $active={i === 7}>
                      {i + 1}
                    </RowHead>
                  ))}
                </RowHeads>
                <Canvas>
                  <Calendar>
                    <YearTitle>
                      <span>2022</span>
                      <span>1</span>
                      <span>Jan</span>
                    </YearTitle>
                    <DayHeads>
                      {['Sun', 'Mon', 'Tue', 'Wed', 'Thu', 'Fri', 'Sat'].map((d) => (
                        <span key={d}>{d}</span>
                      ))}
                    </DayHeads>
                    <DayTable />
                    <TodoHead>TO DO LIST</TodoHead>
                    <TodoBox />
                  </Calendar>
                  <Plan>
                    <PlanTitle>WORK PLAN</PlanTitle>
                    <PlanTable>
                      {['NUM', 'PROJECT', 'MEMBER', 'DATE', 'PROGRESS', 'PS'].map((h) => (
                        <PlanHead key={h}>{h}</PlanHead>
                      ))}
                      <PlanRows />
                    </PlanTable>
                  </Plan>
                </Canvas>
              </GridBody>
            </Grid>
            <VScroll>
              <ScrollHandle />
              <ArrowUp />
              <VThumb />
              <ArrowDown />
            </VScroll>
          </SheetArea>

          <TabStrip>
            <TabNav>
              <Ico w={10} h={13} s={LIGHT}><path d="M1 1v11M9 1 3 6.5 9 12" /></Ico>
              <Ico w={8} h={13} s={LIGHT}><path d="M7 1 1 6.5 7 12" /></Ico>
              <Ico w={8} h={13}><path d="m1 1 6 5.5L1 12" /></Ico>
              <Ico w={10} h={13}><path d="M9 1v11M1 1l6 5.5L1 12" /></Ico>
            </TabNav>
            <JanuaryTab $active>January</JanuaryTab>
            {sheetTabs.map(([t, pl]) => (
              <SheetTab key={t} $pl={pl}>{t}</SheetTab>
            ))}
            <TabEnd />
            <TabTools>
              <Slot $ml={8}>
                <Ico w={12} h={3} s="#5a6070"><path d="M1 1.5h1.5M5.2 1.5h1.5M9.5 1.5H11" strokeWidth="1.6" /></Ico>
              </Slot>
              <Slot $ml={14}>
                <Ico w={13} h={13}><path d="M6.5 0v13M0 6.5h13" /></Ico>
              </Slot>
              <Splitter $ml={18} />
              <HScroll>
                <Ico w={4} h={7} s="#9aa2b4"><path d="M4 0v7L0 3.5z" fill="#9aa2b4" /></Ico>
                <HThumb />
                <Ico w={4} h={7} s="#9aa2b4"><path d="M0 0v7l4-3.5z" fill="#9aa2b4" /></Ico>
              </HScroll>
              <Splitter $ml={9} />
            </TabTools>
          </TabStrip>
        </LeftPane>

        <Rail>
          <RailHandle />
          <RailIcon>
            <Ico w={16} h={16} s="#8e95a3"><path d="M1 1h3v14H1zM6 1h9v3H6zM7 12h7V7M12 9l2-2 2 2M9 10l-2 2 2 2" /></Ico>
          </RailIcon>
          <RailIcon>
            <Ico w={13} h={16}><path d="M1 1v12l3.5-3 2.5 5 2-1-2.5-4.5H12z" /></Ico>
          </RailIcon>
          <RailIcon>
            <Ico w={16} h={12} s="#8e95a3"><circle cx="3" cy="2.5" r="2" /><path d="M5 2.5h11M0 9.5h9" /><circle cx="11" cy="9.5" r="2" /><path d="M13 9.5h3" /></Ico>
          </RailIcon>
          <RailIcon>
            <Ico w={16} h={16}><path d="M2.5 8a6.5 6.5 0 1 1 2 5M.5 6.5l2 2 2-2M8.5 4v4.5H12" /></Ico>
          </RailIcon>
          <RailIcon>
            <Ico w={16} h={16}><circle cx="8" cy="8" r="7.2" /><path d="M5.5 6a2.5 2.5 0 1 1 3.7 2.2c-.8.5-1.2 1-1.2 2M8 11.5v1.2" /></Ico>
          </RailIcon>
          <RailFoot>
            <Ico w={14} h={14} s="#9aa2b4"><rect x=".5" y=".5" width="5" height="5" rx="1" /><rect x="8.5" y=".5" width="5" height="5" rx="1" /><rect x=".5" y="8.5" width="5" height="5" rx="1" /><rect x="8.5" y="8.5" width="5" height="5" rx="1" /></Ico>
          </RailFoot>
        </Rail>
      </Workspace>

      <StatusBar>
        <Ico w={16} h={16}>
          <circle cx="4.5" cy="4.5" r="3.5" /><circle cx="4.5" cy="4.5" r="1.5" />
          <path d="M8 2h7v2h-2v9H3v2h11v-2M3 9v6" />
        </Ico>
        <Slot $ml={838}>
          <Ico w={14} h={15} s="#5a6070"><path d="M3 3V1h10v12h-2M1 3h10v12H1zM6 6v4h3" /></Ico>
        </Slot>
        <Slot $ml={10}>
          <Ico w={16} h={16}><path d="M5 1h6v4h4v6h-4v4H5v-4H1V5h4zM8 1v14M1 8h14" /></Ico>
        </Slot>
        <Caret $ml={5} />
        <StatusDivider $ml={13} />
        <Slot $ml={14}>
          <Ico w={14} h={17}><path d="M4 1h9v15H4v-3M4 13h9M0 7h8M6 5l2 2-2 2M4 5V1" /></Ico>
        </Slot>
        <ActiveView>
          <Ico w={15} h={13}><path d="M.5.5h14v12H.5zM.5 4.5h14M.5 8.5h14M5 .5v12M10 .5v12" /></Ico>
        </ActiveView>
        <Slot $ml={6}>
          <Ico w={15} h={15}><path d="M.5.5h14v14H.5zM2.5 2.5h10v10h-10zM7.5 2.5v10" /></Ico>
        </Slot>
        <Slot $ml={12}>
          <Ico w={15} h={14}><path d="M.5.5h14v13H.5zM5 .5v7h5v-7" /></Ico>
        </Slot>
        <Slot $ml={9}>
          <Ico w={16} h={16}>
            <ellipse cx="8" cy="10" rx="7.5" ry="5" /><circle cx="8" cy="10" r="2.5" /><path d="M8 1v2.5M3 2l1 2M13 2l-1 2" />
          </Ico>
        </Slot>
        <Caret $ml={3} />
        <StatusDivider $ml={13} />
        <ZoomValue>85%</ZoomValue>
        <Caret $ml={4} />
        <Slot $ml={11}>
          <Ico w={10} h={2}><path d="M0 1h10" strokeWidth="2" /></Ico>
        </Slot>
        <Slider />
        <Slot $ml={12}>
          <Ico w={11} h={11}><path d="M5.5 0v11M0 5.5h11" strokeWidth="2" /></Ico>
        </Slot>
        <Slot $ml={13}>
          <Ico w={15} h={15}><path d="M1 5V1h4M1 1l4 4M14 5V1h-4M14 1l-4 4M1 10v4h4M1 14l4-4M14 10v4h-4M14 14l-4-4" /></Ico>
        </Slot>
      </StatusBar>
    </Page>
  )
}
